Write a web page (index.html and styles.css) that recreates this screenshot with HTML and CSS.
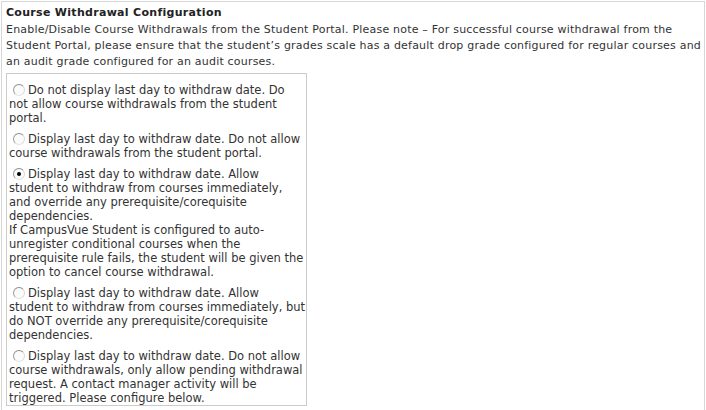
FILE: index.html
```html
<!DOCTYPE html>
<html lang="en">
<head>
  <meta charset="UTF-8">
  <title>Course Withdrawal Configuration</title>
  <link rel="stylesheet" href="styles.css">
</head>
<body>

  <div class="panel">
    <h3 class="panel-title">Course Withdrawal Configuration</h3>
    <p class="panel-desc">Enable/Disable Course Withdrawals from the Student Portal. Please note &ndash; For successful course withdrawal from the Student Portal, please ensure that the student&rsquo;s grades scale has a default drop grade configured for regular courses and an audit grade configured for an audit courses.</p>

    <div class="options">
      <label class="option"><input type="radio" name="withdrawMode" value="0">Do not display last day to withdraw date. Do<br>not allow course withdrawals from the student<br>portal.</label>
      <label class="option"><input type="radio" name="withdrawMode" value="1">Display last day to withdraw date. Do not allow<br>course withdrawals from the student portal.</label>
      <label class="option"><input type="radio" name="withdrawMode" value="2" checked>Display last day to withdraw date. Allow<br>student to withdraw from courses immediately,<br>and override any prerequisite/corequisite<br>dependencies.<br>If CampusVue Student is configured to auto-<br>unregister conditional courses when the<br>prerequisite rule fails, the student will be given the<br>option to cancel course withdrawal.</label>
      <label class="option"><input type="radio" name="withdrawMode" value="3">Display last day to withdraw date. Allow<br>student to withdraw from courses immediately, but<br>do NOT override any prerequisite/corequisite<br>dependencies.</label>
      <label class="option"><input type="radio" name="withdrawMode" value="4">Display last day to withdraw date. Do not allow<br>course withdrawals, only allow pending withdrawal<br>request. A contact manager activity will be<br>triggered. Please configure below.</label>
    </div>
  </div>

</body>
</html>
```

FILE: styles.css
```css
body {
  margin: 0;
  font-family: "DejaVu Sans", Verdana, sans-serif;
  font-size: 11px;
  color: #333333;
  background: #ffffff;
}

.panel {
  margin: 1px 1px 0 1px;
  padding: 2px 0 0 4px;
  border: 1px solid #d6d6d6;
  border-bottom: none;
  height: 420px;
}

.panel-title {
  margin: 0;
  font-size: 11px;
  font-weight: bold;
  line-height: 18px;
  letter-spacing: 0.3px;
  color: #222222;
}

.panel-desc {
  margin: 0 0 3px 0;
  line-height: 16px;
  letter-spacing: 0.2px;
}

.options {
  width: 297px;
  padding: 2px 0 0 2px;
  border: 1px solid #cccccc;
  font-size: 11.5px;
  white-space: nowrap;
}

.option {
  display: block;
  line-height: 14px;
  padding-top: 7px;
}

.option input[type="radio"] {
  appearance: none;
  -webkit-appearance: none;
  width: 12px;
  height: 12px;
  margin: 0 3px 0 4px;
  vertical-align: -2px;
  border: 1px solid;
  border-color: #8a8a8a #d8d8d8 #e4e4e4 #9a9a9a;
  border-radius: 50%;
  background: #fbfbfb;
  position: relative;
}

.option input[type="radio"]:checked::after {
  content: "";
  position: absolute;
  left: 3px;
  top: 3px;
  width: 4px;
  height: 4px;
  border-radius: 50%;
  background: #000000;
}
```
